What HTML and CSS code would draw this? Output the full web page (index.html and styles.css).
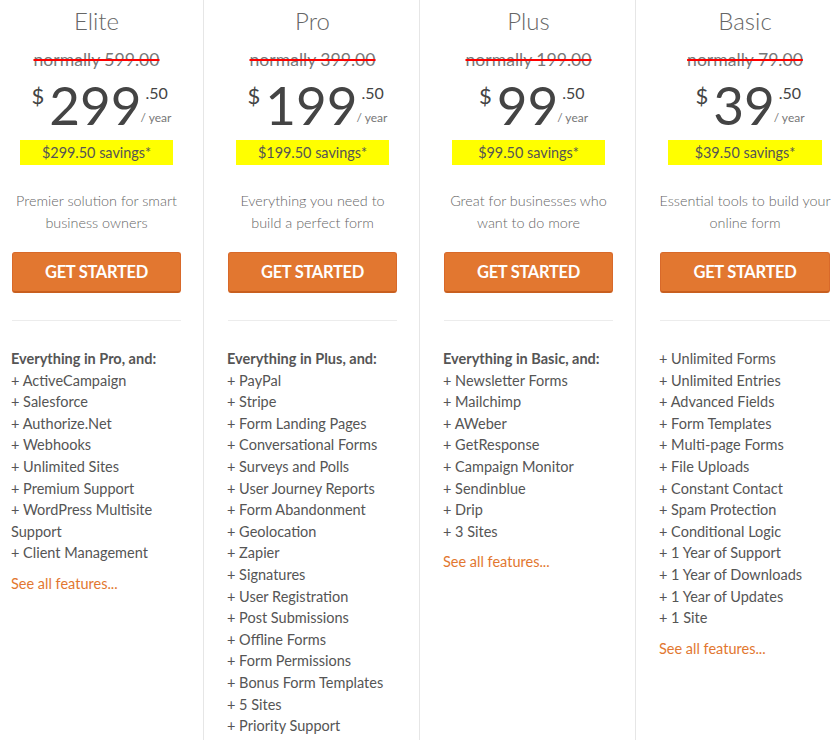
FILE: index.html
```html
<!DOCTYPE html>
<html>
<head>
<meta charset="utf-8">
<link rel="stylesheet" href="styles.css">
</head>
<body>
<div class="plans">
  <div class="plan">
    <h2 class="name">Elite</h2>
    <div class="normally">normally 599.00</div>
    <div class="price"><span class="cur">$</span><span class="amt">299</span><span class="side"><span class="cents">.50</span><span class="per">/ year</span></span></div>
    <div class="savings">$299.50 savings*</div>
    <p class="desc">Premier solution for smart business owners</p>
    <a class="btn">GET STARTED</a>
    <hr class="rule">
    <ul class="features">
      <li class="head">Everything in Pro, and:</li>
      <li>+ ActiveCampaign</li>
      <li>+ Salesforce</li>
      <li>+ Authorize.Net</li>
      <li>+ Webhooks</li>
      <li>+ Unlimited Sites</li>
      <li>+ Premium Support</li>
      <li>+ WordPress Multisite Support</li>
      <li>+ Client Management</li>
    </ul>
    <a class="more">See all features...</a>
  </div>
  <div class="plan">
    <h2 class="name">Pro</h2>
    <div class="normally">normally 399.00</div>
    <div class="price"><span class="cur">$</span><span class="amt">199</span><span class="side"><span class="cents">.50</span><span class="per">/ year</span></span></div>
    <div class="savings">$199.50 savings*</div>
    <p class="desc">Everything you need to build a perfect form</p>
    <a class="btn">GET STARTED</a>
    <hr class="rule">
    <ul class="features">
      <li class="head">Everything in Plus, and:</li>
      <li>+ PayPal</li>
      <li>+ Stripe</li>
      <li>+ Form Landing Pages</li>
      <li>+ Conversational Forms</li>
      <li>+ Surveys and Polls</li>
      <li>+ User Journey Reports</li>
      <li>+ Form Abandonment</li>
      <li>+ Geolocation</li>
      <li>+ Zapier</li>
      <li>+ Signatures</li>
      <li>+ User Registration</li>
      <li>+ Post Submissions</li>
      <li>+ Offline Forms</li>
      <li>+ Form Permissions</li>
      <li>+ Bonus Form Templates</li>
      <li>+ 5 Sites</li>
      <li>+ Priority Support</li>
    </ul>
  </div>
  <div class="plan">
    <h2 class="name">Plus</h2>
    <div class="normally">normally 199.00</div>
    <div class="price"><span class="cur">$</span><span class="amt">99</span><span class="side"><span class="cents">.50</span><span class="per">/ year</span></span></div>
    <div class="savings">$99.50 savings*</div>
    <p class="desc">Great for businesses who want to do more</p>
    <a class="btn">GET STARTED</a>
    <hr class="rule">
    <ul class="features">
      <li class="head">Everything in Basic, and:</li>
      <li>+ Newsletter Forms</li>
      <li>+ Mailchimp</li>
      <li>+ AWeber</li>
      <li>+ GetResponse</li>
      <li>+ Campaign Monitor</li>
      <li>+ Sendinblue</li>
      <li>+ Drip</li>
      <li>+ 3 Sites</li>
    </ul>
    <a class="more">See all features...</a>
  </div>
  <div class="plan">
    <h2 class="name">Basic</h2>
    <div class="normally">normally 79.00</div>
    <div class="price"><span class="cur">$</span><span class="amt">39</span><span class="side"><span class="cents">.50</span><span class="per">/ year</span></span></div>
    <div class="savings">$39.50 savings*</div>
    <p class="desc">Essential tools to build your online form</p>
    <a class="btn">GET STARTED</a>
    <hr class="rule">
    <ul class="features">
      <li>+ Unlimited Forms</li>
      <li>+ Unlimited Entries</li>
      <li>+ Advanced Fields</li>
      <li>+ Form Templates</li>
      <li>+ Multi-page Forms</li>
      <li>+ File Uploads</li>
      <li>+ Constant Contact</li>
      <li>+ Spam Protection</li>
      <li>+ Conditional Logic</li>
      <li>+ 1 Year of Support</li>
      <li>+ 1 Year of Downloads</li>
      <li>+ 1 Year of Updates</li>
      <li>+ 1 Site</li>
    </ul>
    <a class="more">See all features...</a>
  </div>
</div>
</body>
</html>
```
FILE: styles.css
```css
html, body {
  margin: 0;
  padding: 0;
  background: #fff;
  overflow: hidden;
}
body {
  font-family: Lato, "Open Sans", sans-serif;
  color: #555;
}
.plans {
  display: flex;
  margin-left: -12px;
  height: 740px;
}
.plan {
  box-sizing: border-box;
  width: 216px;
  flex: none;
  padding: 6px 22px 0 24px;
  border-right: 1px solid #e6e6e6;
  display: flex;
  flex-direction: column;
  align-items: stretch;
}
.plan:last-child {
  border-right: none;
}
.name {
  margin: 0;
  font-size: 24px;
  font-weight: 300;
  line-height: 30px;
  color: #666;
  text-align: center;
}
.normally {
  margin-top: 14px;
  font-size: 17.6px;
  line-height: 20px;
  color: #777;
  text-align: center;
  text-decoration: line-through;
  text-decoration-color: #f00;
  text-decoration-thickness: 2px;
}
.price {
  display: flex;
  justify-content: center;
  align-items: flex-start;
  margin-top: 8px;
  color: #444;
  padding-left: 10px;
}
.cur {
  font-size: 22px;
  line-height: 22px;
  margin-top: 7px;
  margin-right: 5px;
}
.amt {
  font-size: 53px;
  line-height: 53px;
}
.side {
  display: flex;
  flex-direction: column;
  align-items: flex-start;
  margin-left: 4px;
}
.cents {
  font-size: 16px;
  line-height: 16px;
  margin-top: 7px;
}
.per {
  font-size: 12px;
  line-height: 12px;
  margin-top: 11px;
  margin-left: -5px;
  color: #777;
}
.savings {
  margin: 9px 8px 0;
  background: #ffff00;
  font-size: 14.4px;
  line-height: 25px;
  text-align: center;
  color: #555;
}
.desc {
  margin: 25px -4px 0;
  font-size: 14.4px;
  font-weight: 300;
  line-height: 22px;
  color: #666;
  text-align: center;
}
.btn {
  display: block;
  margin-top: 18px;
  height: 41px;
  box-sizing: border-box;
  background: #e27730;
  border: 1px solid #d8692a;
  border-bottom: 2px solid #c85f1f;
  border-radius: 3px;
  color: #fff;
  font-weight: 700;
  font-size: 16.5px;
  line-height: 38px;
  text-align: center;
  letter-spacing: -0.3px;
}
.rule {
  margin: 27px 0 0;
  border: none;
  border-top: 1px solid #ececec;
  height: 0;
}
.features {
  list-style: none;
  margin: 27px 0 0 -1px;
  padding: 0;
  font-size: 14.5px;
  line-height: 21.6px;
  color: #555;
}
.features .head {
  font-weight: 700;
}
.more {
  display: block;
  margin: 9px 0 0 -1px;
  font-size: 14.5px;
  line-height: 21.6px;
  color: #e27730;
}
```
